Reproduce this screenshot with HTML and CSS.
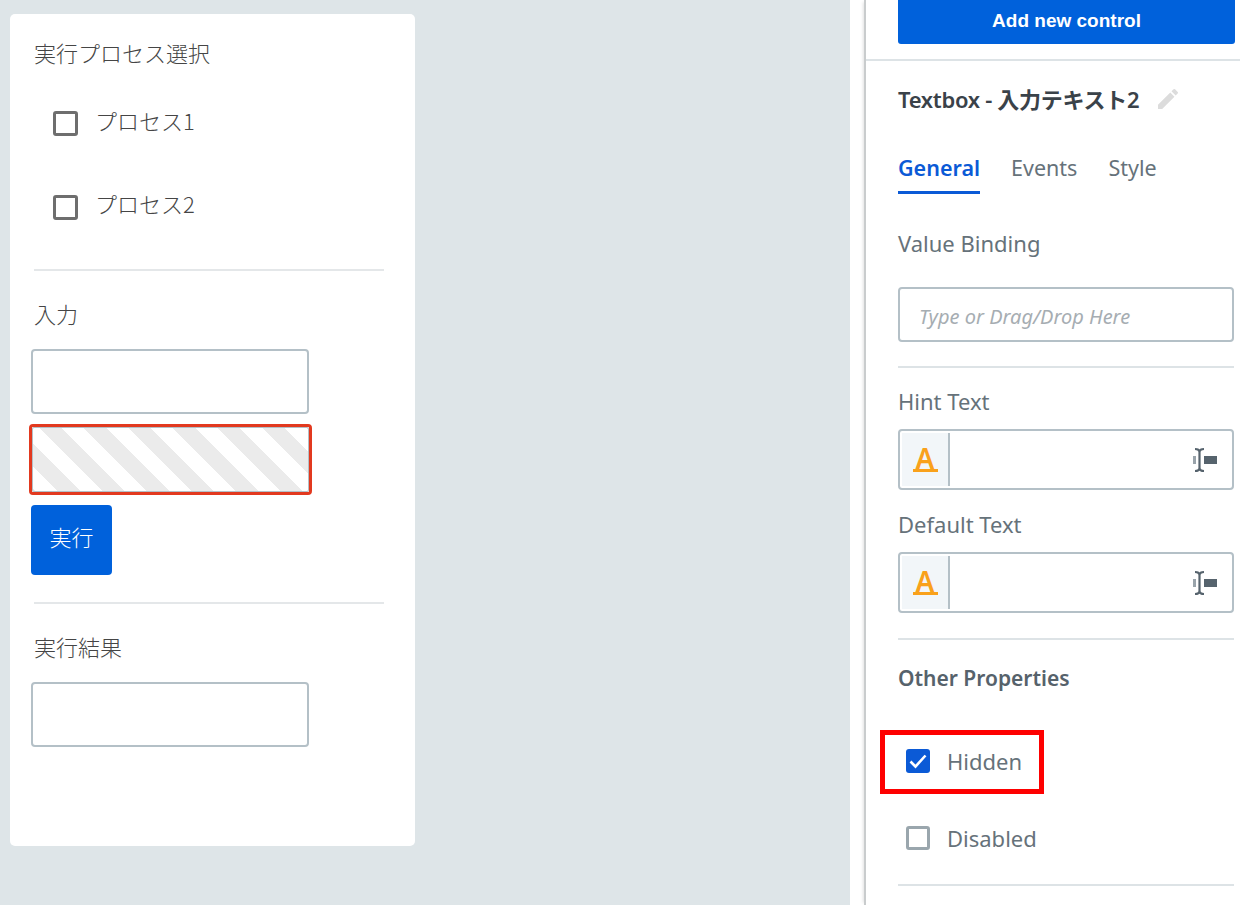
FILE: index.html
```html
<!DOCTYPE html>
<html lang="ja">
<head>
<meta charset="utf-8">
<title>Textbox</title>
<link rel="stylesheet" href="styles.css">
</head>
<body>
<main class="page">
  <section class="canvas">
    <div class="card">
      <div class="label first">実行プロセス選択</div>
      <div class="proc proc-1"><span class="box"></span><span>プロセス1</span></div>
      <div class="proc proc-2"><span class="box"></span><span>プロセス2</span></div>
      <hr class="rule rule-1">
      <div class="label">入力</div>
      <div class="input input-1"></div>
      <div class="selected"><div class="input striped"></div></div>
      <button class="run">実行</button>
      <hr class="rule rule-2">
      <div class="label">実行結果</div>
      <div class="input input-1"></div>
    </div>
  </section>
  <aside class="panel">
    <div class="inner">
      <div class="head"><button class="add">Add new control</button></div>
      <div class="title-row">
        <h2 class="title">Textbox - 入力テキスト2</h2>
        <svg class="pencil" viewBox="3 3 18 18" width="20" height="20"><path fill="#dcdcdc" d="M3 17.25V21h3.75L17.81 9.94l-3.75-3.75L3 17.25zM20.71 7.04a1 1 0 0 0 0-1.41l-2.34-2.34a1 1 0 0 0-1.41 0l-1.83 1.83 3.75 3.75 1.83-1.83z"/></svg>
      </div>
      <nav class="tabs">
        <span class="tab active">General</span>
        <span class="tab">Events</span>
        <span class="tab">Style</span>
      </nav>
      <div class="field-label binding">Value Binding</div>
      <div class="text-field">Type or Drag/Drop Here</div>
      <hr class="prule prule-1">
      <div class="field-label hint">Hint Text</div>
      <div class="adorned">
        <span class="adorn"><span class="a-glyph">A</span></span>
        <svg class="cursor" viewBox="0 0 24 26" width="24" height="26"><path fill="none" stroke="#56636d" stroke-width="2.2" d="M2 2c2 0 4 0 4.500 2.500C7 2 9 2 11 2M6.500 4v18M2 24c2 0 4 0 4.500-2.500C7 24 9 24 11 24"/><rect x="11" y="9" width="13" height="8" fill="#56636d"/><rect x="0" y="9" width="3" height="8" fill="#9aa4ab"/></svg>
      </div>
      <div class="field-label default">Default Text</div>
      <div class="adorned">
        <span class="adorn"><span class="a-glyph">A</span></span>
        <svg class="cursor" viewBox="0 0 24 26" width="24" height="26"><path fill="none" stroke="#56636d" stroke-width="2.2" d="M2 2c2 0 4 0 4.500 2.500C7 2 9 2 11 2M6.500 4v18M2 24c2 0 4 0 4.500-2.500C7 24 9 24 11 24"/><rect x="11" y="9" width="13" height="8" fill="#56636d"/><rect x="0" y="9" width="3" height="8" fill="#9aa4ab"/></svg>
      </div>
      <hr class="prule prule-2">
      <h3 class="other">Other Properties</h3>
      <div class="option hidden-opt">
        <span class="pbox checked"><svg viewBox="0 0 24 24" width="24" height="24"><path fill="none" stroke="#fff" stroke-width="2.6" d="M4.500 12.500l5 5 10-11"/></svg></span>
        <span>Hidden</span>
        <span class="callout"></span>
      </div>
      <div class="option disabled-opt"><span class="pbox"></span><span>Disabled</span></div>
      <hr class="prule prule-3">
    </div>
  </aside>
</main>
</body>
</html>
```

FILE: styles.css
```css
* { box-sizing: border-box; }
html, body { margin: 0; height: 905px; overflow: hidden; }
body { background: #dee5e8; font-family: "Noto Sans", "Noto Sans CJK JP", sans-serif; color: #5b6770; }
.page { display: flex; height: 905px; }

.canvas { width: 850px; padding: 14px 0 0 10px; }
.card { width: 405px; height: 832px; background: #fff; border-radius: 5px; padding: 24px 0 0 21px; font-family: "Noto Sans CJK JP", "Noto Sans", sans-serif; color: #454545; font-size: 22px; }
.label { height: 28px; line-height: 28px; padding-left: 3px; margin-top: 28px; font-weight: 300; }
.label.first { margin-top: 0; }
.proc { display: flex; align-items: center; margin-left: 22px; height: 25px; gap: 17px; line-height: 25px; font-weight: 300; }
.proc span:last-child { position: relative; top: -3px; }
.proc-1 { margin-top: 45px; }
.proc-2 { margin-top: 59px; }
.proc-2 span:last-child { top: -4px; }
.box { width: 25px; height: 25px; border: 3px solid #6e6e6e; border-radius: 3px; flex: none; }
.rule { border: 0; height: 2px; background: #e4e7e9; width: 350px; margin: 0 0 0 3px; }
.rule-1 { margin-top: 49px; }
.rule-2 { margin-top: 27px; }
.input { width: 278px; height: 65px; border: 2px solid #b4c0c7; border-radius: 4px; background: #fff; }
.input-1 { margin-top: 22px; }
.selected { width: 283px; height: 71px; margin: 10px 0 0 -2px; border: 3px solid #e2391f; border-radius: 4px; }
.striped { width: 277px; border-width: 1px; height: 65px; border-radius: 2px; background: repeating-linear-gradient(45deg, #ebebeb 0 1.75px, #fff 1.75px 17.5px, #ebebeb 17.5px 31.5px); }
.run { display: block; width: 81px; height: 70px; margin-top: 10px; border: 0; border-radius: 4px; background: #0061db; color: #fff; font: 300 22px "Noto Sans CJK JP", sans-serif; padding: 0 0 8px; }

.panel { width: 390px; height: 905px; background: #fff; padding-left: 14px; }
.inner { height: 905px; border-left: 2px solid #c9cccd; box-shadow: -3px 0 3px -2px #e3e3e3; }
.head { height: 61px; padding-left: 32px; border-bottom: 2px solid #dde3e6; }
.add { display: block; width: 337px; height: 44px; border: 0; border-radius: 0 0 3px 3px; background: #0061db; color: #fff; font: 700 19px "Liberation Sans", sans-serif; padding: 0 0 2px; }
.title-row { display: flex; align-items: center; margin: 24px 0 0 32px; height: 28px; gap: 19px; }
.title { margin: 0; font-size: 22px; font-weight: 600; color: #3a4249; line-height: 28px; letter-spacing: -0.3px; }
.tabs { display: flex; margin: 39px 0 0 32px; gap: 31px; height: 42px; }
.tab { font-size: 21.5px; line-height: 32px; height: 42px; color: #66727a; }
.tab.active { color: #0b5ad6; font-weight: 600; border-bottom: 3px solid #0b5ad6; }
.field-label { margin-left: 32px; font-size: 22px; line-height: 28px; height: 28px; color: #66727a; }
.binding { margin-top: 35px; }
.hint { margin-top: 19px; }
.default { margin-top: 20px; }
.text-field { margin: 30px 0 0 32px; width: 336px; height: 55px; border: 2px solid #b4c0c7; border-radius: 4px; font-size: 20px; font-style: italic; color: #a6adb2; line-height: 55px; padding-left: 19px; }
.prule { border: 0; height: 2px; background: #dde3e6; margin: 0 0 0 32px; width: 336px; }
.prule-1 { margin-top: 24px; }
.prule-2 { margin-top: 25px; }
.prule-3 { margin-top: 34px; }
.adorned { display: flex; align-items: center; justify-content: space-between; margin: 14px 0 0 32px; width: 336px; height: 61px; border: 2px solid #b4c0c7; border-radius: 4px; padding: 2px 15px 2px 2px; }
.adorn { display: flex; align-items: center; justify-content: center; width: 48px; height: 100%; background: #f2f6f9; border-right: 2px solid #b4c0c7; }
.a-glyph { display: block; font: 600 28px/22px "Noto Sans", sans-serif; color: #f9a11b; border-bottom: 3px solid #f9a11b; height: 25px; width: 25px; text-align: center; }
.cursor { flex: none; }
.other { margin: 23px 0 0 32px; font-size: 21px; font-weight: 600; line-height: 30px; color: #56626b; }
.option { position: relative; display: flex; align-items: center; margin-left: 40px; height: 24px; gap: 17px; font-size: 22px; color: #66727a; }
.hidden-opt { margin-top: 56px; }
.disabled-opt { margin-top: 53px; }
.pbox { width: 24px; height: 24px; border: 3px solid #9aa6ad; border-radius: 3px; flex: none; display: flex; align-items: center; justify-content: center; }
.pbox.checked { background: #0b5ad6; border: 0; }
.callout { position: absolute; left: -26px; top: -19px; width: 164px; height: 64px; border: 5px solid #fe0000; }
```
